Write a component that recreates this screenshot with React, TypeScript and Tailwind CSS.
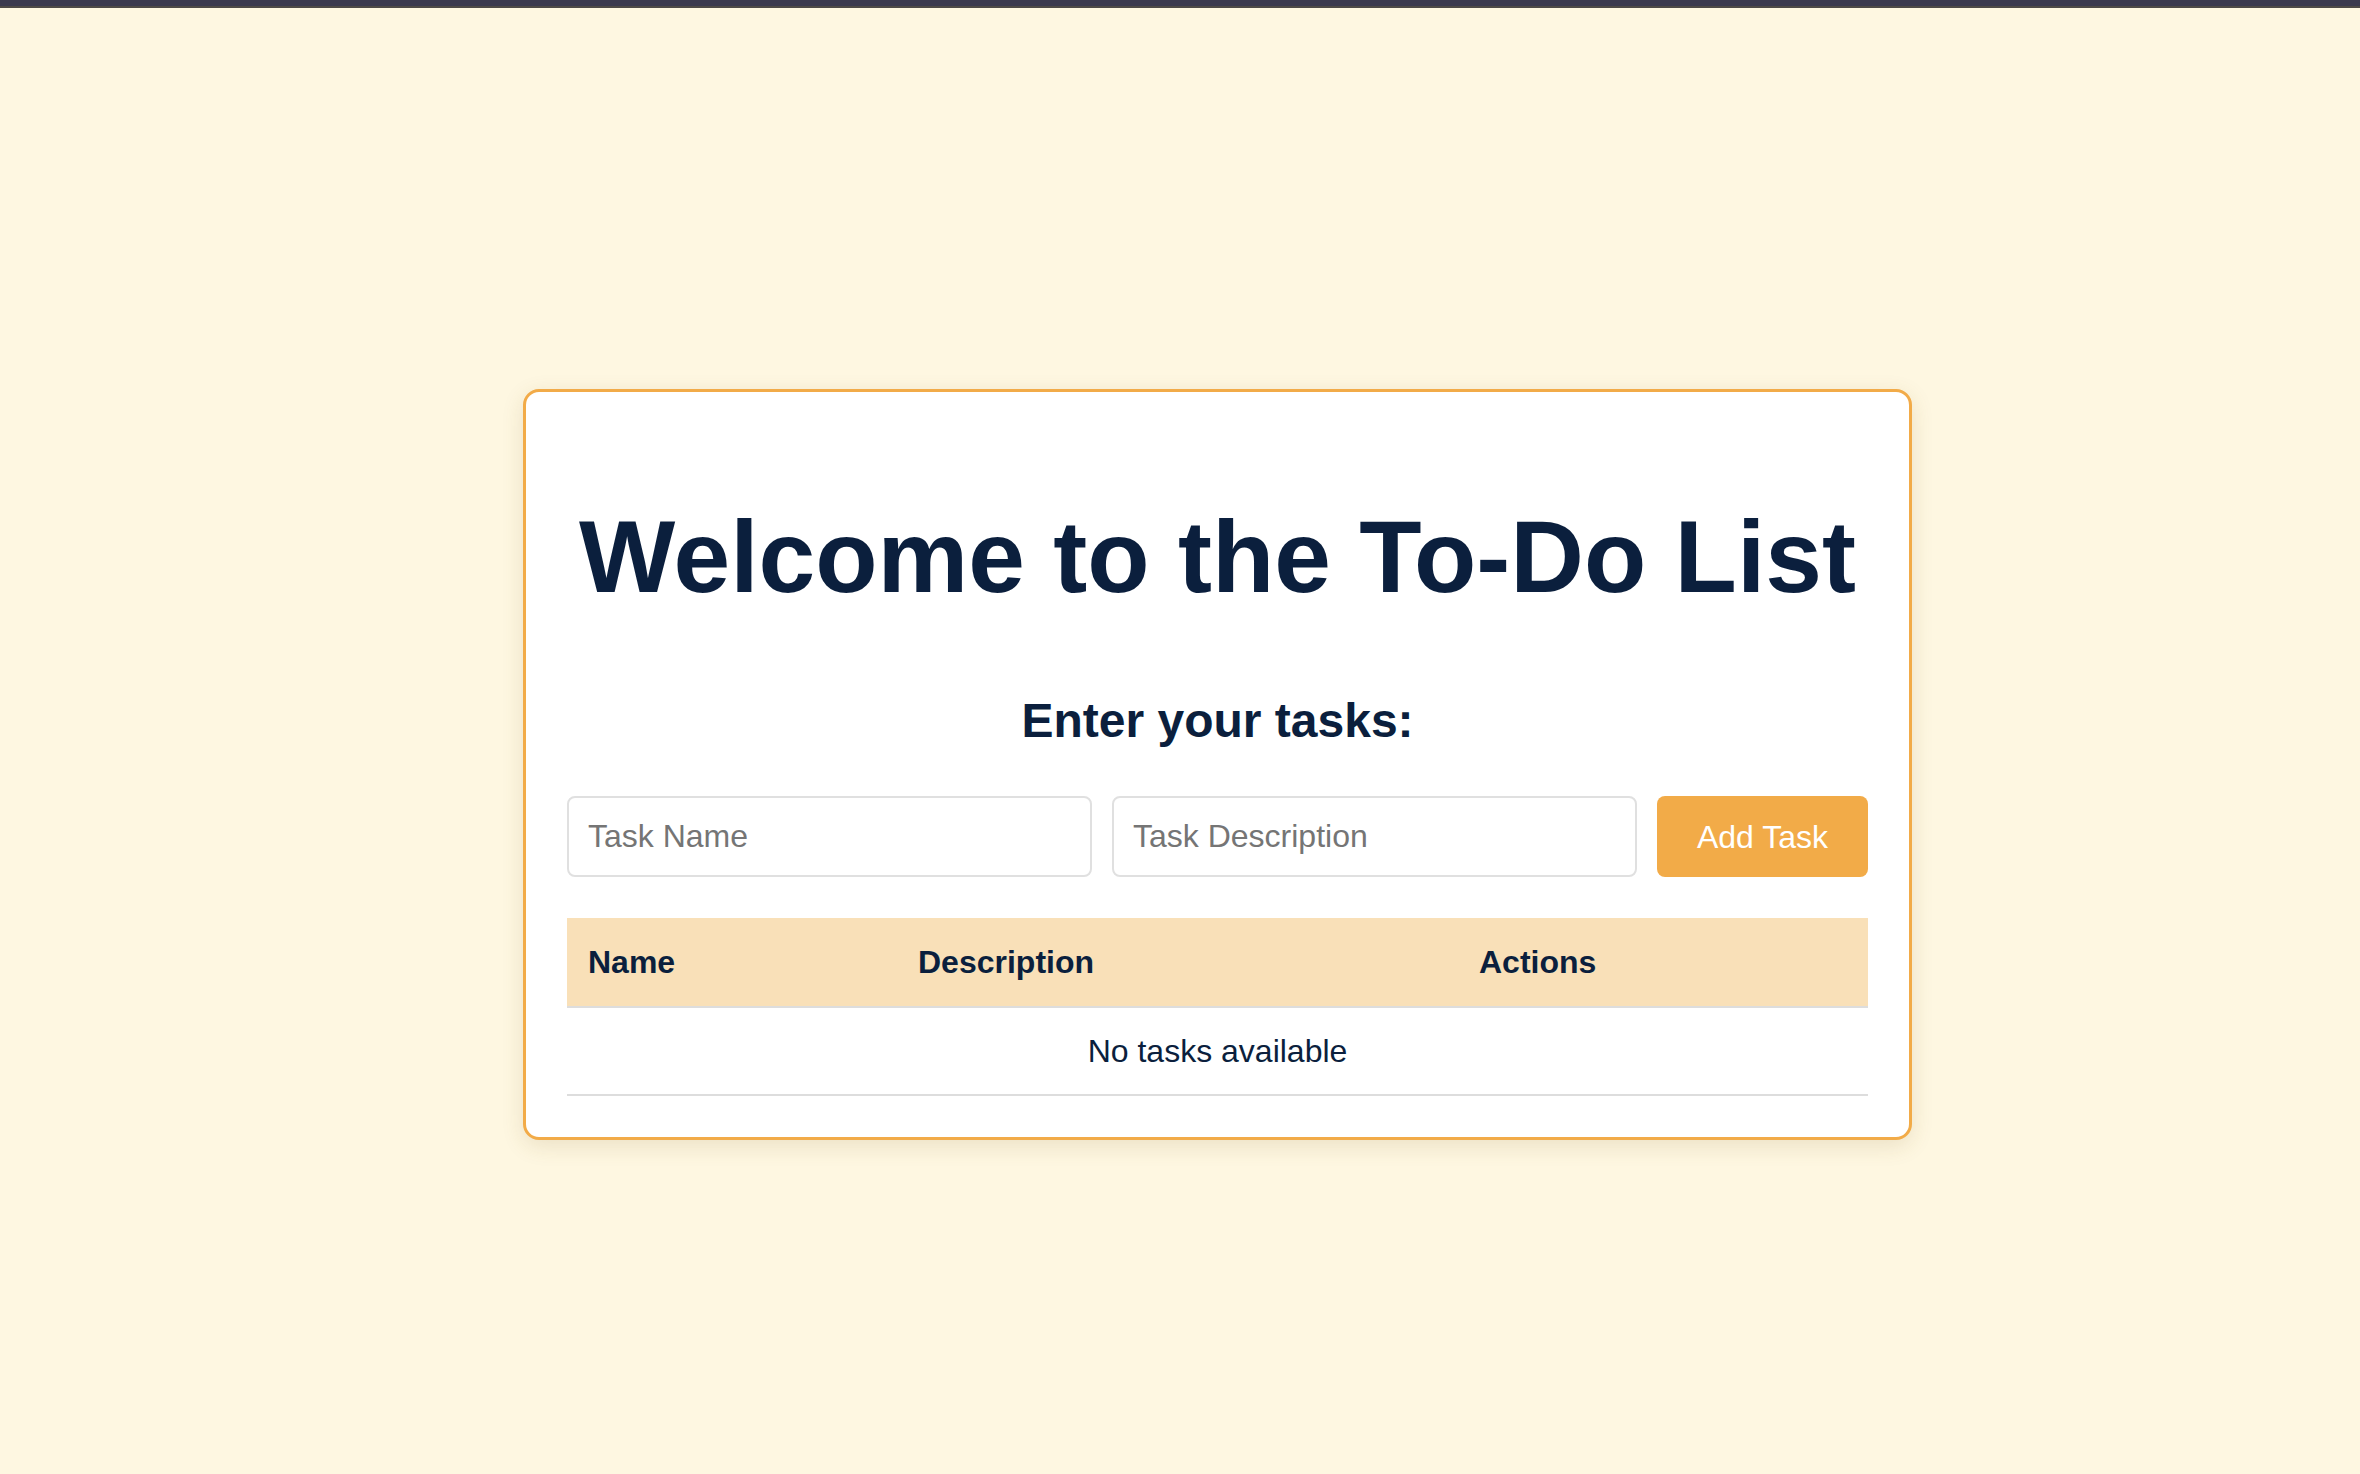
import React from "react";

export default function App() {
  return (
    <div className="min-h-screen bg-[#fef7e1] font-['Liberation_Sans',Arial,sans-serif] text-[#0b1f3d]">
      <div className="h-[8px] bg-[#3b3a4e] border-b-2 border-[#4e4a46]" />
      <div className="pl-[523px] pt-[381px] pb-[200px]">
        <div className="w-[1389px] rounded-[16px] border-[3px] border-[#f2ab48] bg-white p-[41px] shadow-[0_6px_22px_rgba(120,90,30,0.14)]">
          <h1 className="mt-[73px] text-center text-[102px] font-bold leading-none">
            Welcome to the To-Do List
          </h1>
          <h2 className="mt-[89px] text-center text-[48px] font-bold leading-none">
            Enter your tasks:
          </h2>
          <div className="mt-[51px] flex gap-[20px]">
            <input
              className="h-[81px] w-[525px] rounded-[8px] border-2 border-[#e0e0e0] px-[19px] text-[32px] text-[#0b1f3d] outline-none placeholder:text-[#757575]"
              placeholder="Task Name"
            />
            <input
              className="h-[81px] w-[525px] rounded-[8px] border-2 border-[#e0e0e0] px-[19px] text-[32px] text-[#0b1f3d] outline-none placeholder:text-[#757575]"
              placeholder="Task Description"
            />
            <button className="h-[81px] flex-1 rounded-[8px] bg-[#f2ab48] text-[32px] text-white">
              Add Task
            </button>
          </div>
          <table className="mt-[41px] w-full border-collapse">
            <thead>
              <tr className="bg-[#f9e0b8] border-b-2 border-[#dddddd]">
                <th className="h-[89px] w-[330px] px-[21px] text-left align-middle text-[32px] font-bold leading-none">
                  Name
                </th>
                <th className="h-[89px] w-[561px] px-[21px] text-left align-middle text-[32px] font-bold leading-none">
                  Description
                </th>
                <th className="h-[89px] px-[21px] text-left align-middle text-[32px] font-bold leading-none">
                  Actions
                </th>
              </tr>
            </thead>
            <tbody>
              <tr className="border-b-2 border-[#dddddd]">
                <td colSpan={3} className="h-[88px] text-center align-middle text-[32px] leading-none">
                  No tasks available
                </td>
              </tr>
            </tbody>
          </table>
        </div>
      </div>
    </div>
  );
}
